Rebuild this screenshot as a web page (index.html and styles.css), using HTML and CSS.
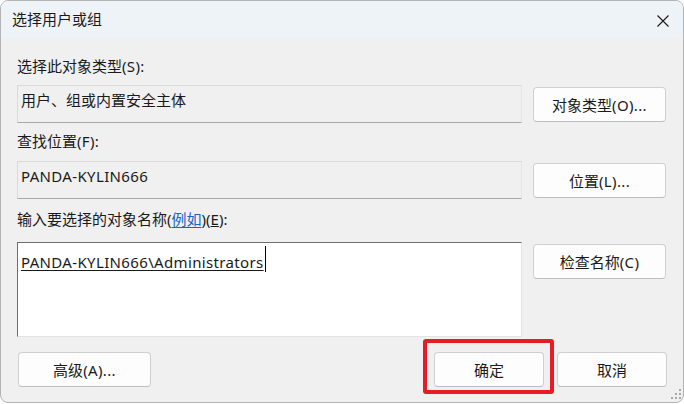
FILE: index.html
```html
<!DOCTYPE html>
<html lang="zh-CN">
<head>
<meta charset="utf-8">
<title>选择用户或组</title>
<link rel="stylesheet" href="styles.css">
</head>
<body>
<div class="window">
  <div class="titlebar">
    <span class="title">选择用户或组</span>
    <span class="close">
      <svg width="12" height="12" viewBox="0 0 12 12"><path d="M0.5 0.5 L11.5 11.5 M11.5 0.5 L0.5 11.5" stroke="#1a1a1a" stroke-width="1.1" fill="none"/></svg>
    </span>
  </div>
  <div class="content">
    <div class="label l1">选择此对象类型<span class="lat">(S):</span></div>
    <div class="row r1">
      <div class="field">用户、组或内置安全主体</div>
      <button class="btn side">对象类型<span class="lat">(O)...</span></button>
    </div>
    <div class="label l2">查找位置<span class="lat">(F):</span></div>
    <div class="row r2">
      <div class="field"><span class="lat">PANDA-KYLIN666</span></div>
      <button class="btn side">位置<span class="lat">(L)...</span></button>
    </div>
    <div class="label l3">输入要选择的对象名称(<span class="link">例如</span>)(<u>E</u>):</div>
    <div class="row r3">
      <div class="textarea"><span class="name lat">PANDA-KYLIN666\Administrators</span><span class="caret"></span></div>
      <button class="btn side">检查名称<span class="lat">(C)</span></button>
    </div>
    <div class="bottom">
      <button class="btn adv">高级<span class="lat">(A)...</span></button>
      <div class="actions">
        <button class="btn act">确定</button>
        <button class="btn act">取消</button>
      </div>
    </div>
  </div>
  <div class="highlight"></div>
  <div class="grip">
    <i class="d1"></i><i class="d2"></i><i class="d3"></i><i class="d4"></i><i class="d5"></i><i class="d6"></i>
  </div>
</div>
</body>
</html>
```
FILE: styles.css
```css
* { box-sizing: border-box; }
html, body { margin: 0; padding: 0; background: #ffffff; }
body {
  font-family: "Noto Sans", "Noto Sans CJK SC", sans-serif;
  font-size: 15px;
  color: #1a1a1a;
}
.lat { letter-spacing: 0.35px; }
.window {
  position: relative;
  width: 684px;
  height: 403px;
  border: 1px solid #b4b4b4;
  border-radius: 8px;
  overflow: hidden;
  background: #f0f0f0;
  display: flex;
  flex-direction: column;
}
.titlebar {
  height: 37px;
  flex: none;
  background: #eef3f8;
  display: flex;
  align-items: center;
  justify-content: space-between;
  padding: 0 14px 0 11px;
}
.title { line-height: 20px; margin-top: -1px; }
.close { display: flex; width: 12px; height: 12px; margin-top: 2px; }
.content {
  padding: 0 16px 0 16px;
  display: flex;
  flex-direction: column;
}
.label { line-height: 20px; white-space: nowrap; }
.l1 { margin-top: 18px; }
.l2 { margin-top: 8px; }
.l3 { margin-top: 10px; }
.row {
  display: grid;
  grid-template-columns: 505px 133px;
  column-gap: 11px;
  align-items: start;
}
.r1 { margin-top: 9px; }
.r2 { margin-top: 10px; }
.r3 { margin-top: 13px; }
.field {
  height: 38px;
  border: 1px solid #dadada;
  border-bottom-color: #a8a8a8;
  border-right-color: #e6e6e6;
  background: #f0f0f0;
  padding: 4px 3px;
  line-height: 20px;
  white-space: nowrap;
}
.btn {
  font: inherit;
  color: #1a1a1a;
  height: 35px;
  background: #fdfdfd;
  border: 1px solid #d0d0d0;
  border-bottom-color: #bdbdbd;
  border-radius: 4px;
  padding: 0;
  line-height: 20px;
  text-align: center;
}
.side { margin-top: 2px; width: 133px; }
.textarea {
  height: 95px;
  background: #ffffff;
  border: 1px solid #e3e3e3;
  border-top-color: #6e6e6e;
  border-left-color: #6e6e6e;
  padding: 9px 3px;
  line-height: 20px;
  display: flex;
  align-items: flex-start;
}
.name { text-decoration: underline; text-underline-offset: 2px; }
.caret {
  display: inline-block;
  width: 1px;
  height: 26px;
  background: #000;
  margin-top: -6px;
  margin-left: 1px;
}
.link { color: #1a63c4; text-decoration: underline; text-underline-offset: 2px; }
.bottom {
  margin-top: 15px;
  display: flex;
  justify-content: space-between;
}
.adv { width: 133px; margin-left: 1px; }
.actions { display: flex; gap: 13px; }
.act { width: 110px; }
.highlight {
  position: absolute;
  left: 422px;
  top: 338px;
  width: 131px;
  height: 55px;
  border: 4px solid #e81c24;
  border-radius: 3px;
}
.grip { position: absolute; right: 2px; bottom: 1px; width: 12px; height: 12px; }
.grip i { position: absolute; width: 2px; height: 2px; background: #a8a8a8; }
.d1 { right: 0; top: 0; }
.d2 { right: 0; top: 4px; }
.d3 { right: 4px; top: 4px; }
.d4 { right: 0; top: 8px; }
.d5 { right: 4px; top: 8px; }
.d6 { right: 8px; top: 8px; }
```
